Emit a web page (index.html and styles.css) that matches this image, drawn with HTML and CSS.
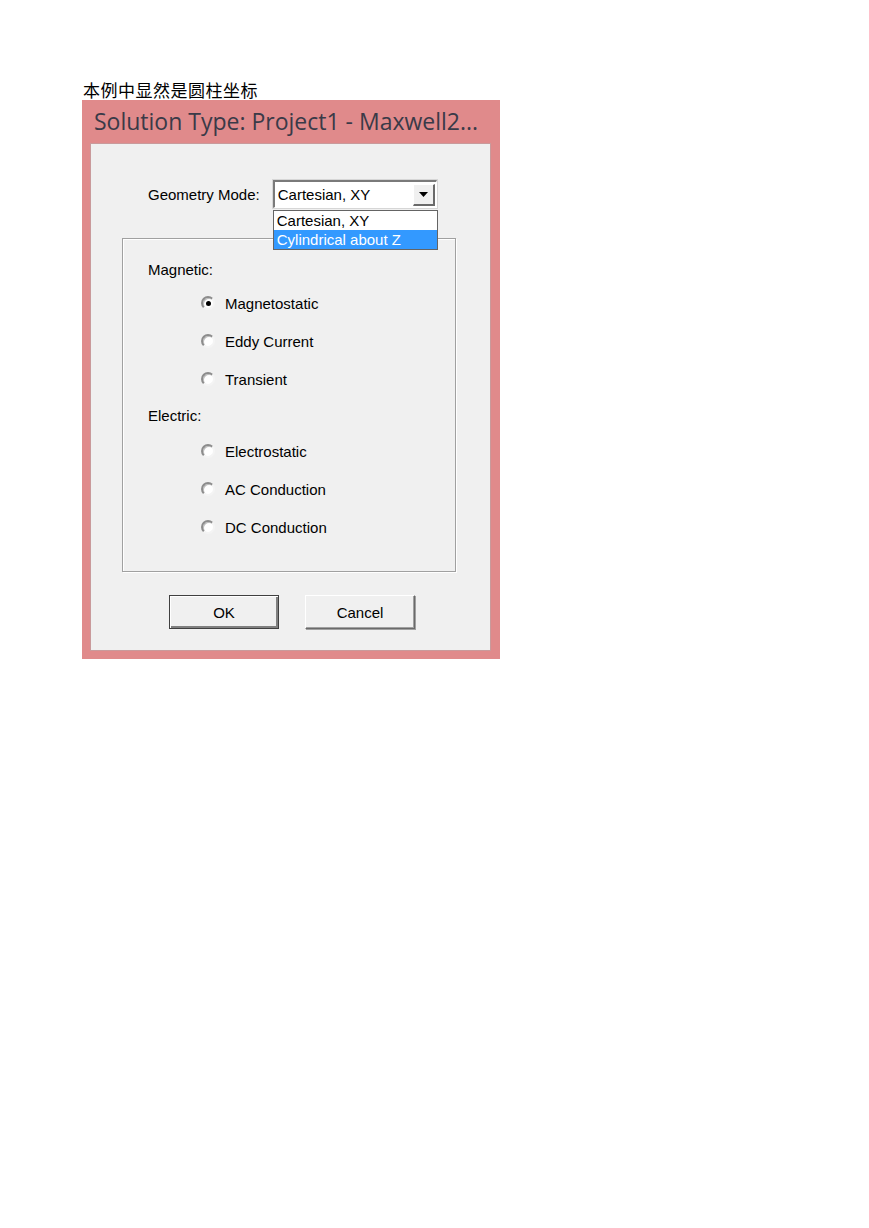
FILE: index.html
```html
<!DOCTYPE html>
<html lang="zh-CN">
<head>
  <meta charset="UTF-8" />
  <meta name="viewport" content="width=device-width, initial-scale=1.0"/>
  <title>Solution Type</title>
  <link rel="stylesheet" href="styles.css">
</head>
<body>
  <p class="caption">本例中显然是圆柱坐标</p>

  <div class="dialog">
    <div class="title">Solution Type: Project1 - Maxwell2...</div>

    <div class="panel">
      <div class="geometry">
        <span class="label">Geometry Mode:</span>
        <div class="combo">
          <span class="combo-value">Cartesian, XY</span>
          <span class="combo-button">
            <svg width="9" height="5" viewBox="0 0 9 5"><polygon points="0,0 9,0 4.5,5" fill="#000"/></svg>
          </span>
          <ul class="combo-list">
            <li>Cartesian, XY</li>
            <li class="selected">Cylindrical about Z</li>
          </ul>
        </div>
      </div>

      <div class="group">
        <div class="group-label">Magnetic:</div>
        <label class="radio"><span class="dot on"></span>Magnetostatic</label>
        <label class="radio"><span class="dot"></span>Eddy Current</label>
        <label class="radio"><span class="dot"></span>Transient</label>

        <div class="group-label">Electric:</div>
        <label class="radio first"><span class="dot"></span>Electrostatic</label>
        <label class="radio"><span class="dot"></span>AC Conduction</label>
        <label class="radio"><span class="dot"></span>DC Conduction</label>
      </div>

      <div class="buttons">
        <button class="default">OK</button>
        <button>Cancel</button>
      </div>
    </div>
  </div>
</body>
</html>
```

FILE: styles.css
```css
body {
  margin: 0;
  padding: 80px 0 0 82px;
  background: #fff;
  font-family: "Liberation Sans", Arial, sans-serif;
}

.caption {
  margin: 0 0 0 1px;
  font-family: "Noto Sans CJK SC", sans-serif;
  font-size: 17px;
  letter-spacing: 0.5px;
  line-height: 20px;
  color: #000;
}

.dialog {
  width: 418px;
  height: 559px;
  background: #e08a8b;
  box-sizing: border-box;
  padding: 0 9px 8px 8px;
  display: flex;
  flex-direction: column;
}

.title {
  height: 43px;
  padding-left: 4px;
  font-family: "Open Sans", sans-serif;
  font-size: 23px;
  line-height: 43px;
  color: #3a3a48;
  white-space: nowrap;
}

.panel {
  flex: 1;
  background: #f0f0f0;
  border: 1px solid #c99a9b;
  position: relative;
  font-size: 15px;
  color: #000;
}

.geometry {
  display: flex;
  align-items: center;
  margin: 36px 0 0 57px;
  gap: 13px;
}

.combo {
  position: relative;
  width: 164px;
  height: 28px;
  box-sizing: border-box;
  background: #fff;
  border-top: 2px solid #7a7a7a;
  border-left: 2px solid #7a7a7a;
  border-right: 1px solid #fff;
  border-bottom: 1px solid #fff;
  box-shadow: 0 0 0 1px #d6d6d6;
  display: flex;
  align-items: center;
}

.combo-value {
  flex: 1;
  padding-left: 3px;
}

.combo-button {
  width: 22px;
  height: 22px;
  margin-right: 1px;
  box-sizing: border-box;
  background: #f0f0f0;
  border-top: 1px solid #fff;
  border-left: 1px solid #fff;
  border-right: 2px solid #6a6a6a;
  border-bottom: 2px solid #6a6a6a;
  display: flex;
  align-items: center;
  justify-content: center;
}

.combo-list {
  position: absolute;
  left: -2px;
  top: 28px;
  width: 165px;
  margin: 0;
  padding: 0;
  list-style: none;
  background: #fff;
  border: 1px solid #646464;
  box-sizing: border-box;
  z-index: 2;
}

.combo-list li {
  height: 19px;
  line-height: 19px;
  padding-left: 3px;
}

.combo-list li.selected {
  background: #3399ff;
  color: #fff;
}

.group {
  margin: 30px 0 0 31px;
  width: 334px;
  height: 334px;
  box-sizing: border-box;
  border: 1px solid #a0a0a0;
  box-shadow: 1px 1px 0 #fff, inset 1px 1px 0 #fff;
  padding: 20px 0 0 25px;
  display: flex;
  flex-direction: column;
}

.group-label {
  height: 22px;
  line-height: 22px;
}

.radio {
  display: flex;
  align-items: center;
  height: 22px;
  margin: 16px 0 0 53px;
  gap: 10px;
}

.group-label + .radio {
  margin-top: 11px;
}

.group-label + .radio.first {
  margin-top: 13px;
}

.radio + .group-label {
  margin-top: 15px;
}

.dot {
  width: 14px;
  height: 14px;
  box-sizing: border-box;
  border-radius: 50%;
  background: #fff;
  border: 2px solid;
  border-color: #8c8c8c #f4f4f4 #f4f4f4 #8c8c8c;
  box-shadow: inset 1px 1px 0 #bdbdbd;
  position: relative;
}

.dot.on::after {
  content: "";
  position: absolute;
  left: 3px;
  top: 3px;
  width: 5px;
  height: 5px;
  border-radius: 50%;
  background: #000;
}

.buttons {
  display: flex;
  gap: 26px;
  margin: 23px 0 0 78px;
}

.buttons button {
  width: 110px;
  height: 34px;
  font-family: "Liberation Sans", Arial, sans-serif;
  font-size: 15px;
  color: #000;
  background: #f0f0f0;
  border: 1px solid;
  border-color: #fff #6a6a6a #6a6a6a #fff;
  box-shadow: inset -1px -1px 0 #a0a0a0, 1px 1px 0 #a0a0a0;
  padding: 0;
}

.buttons button.default {
  border: 1px solid #404040;
  box-shadow: inset 1px 1px 0 #fff, inset -2px -2px 0 #808080;
}
```
